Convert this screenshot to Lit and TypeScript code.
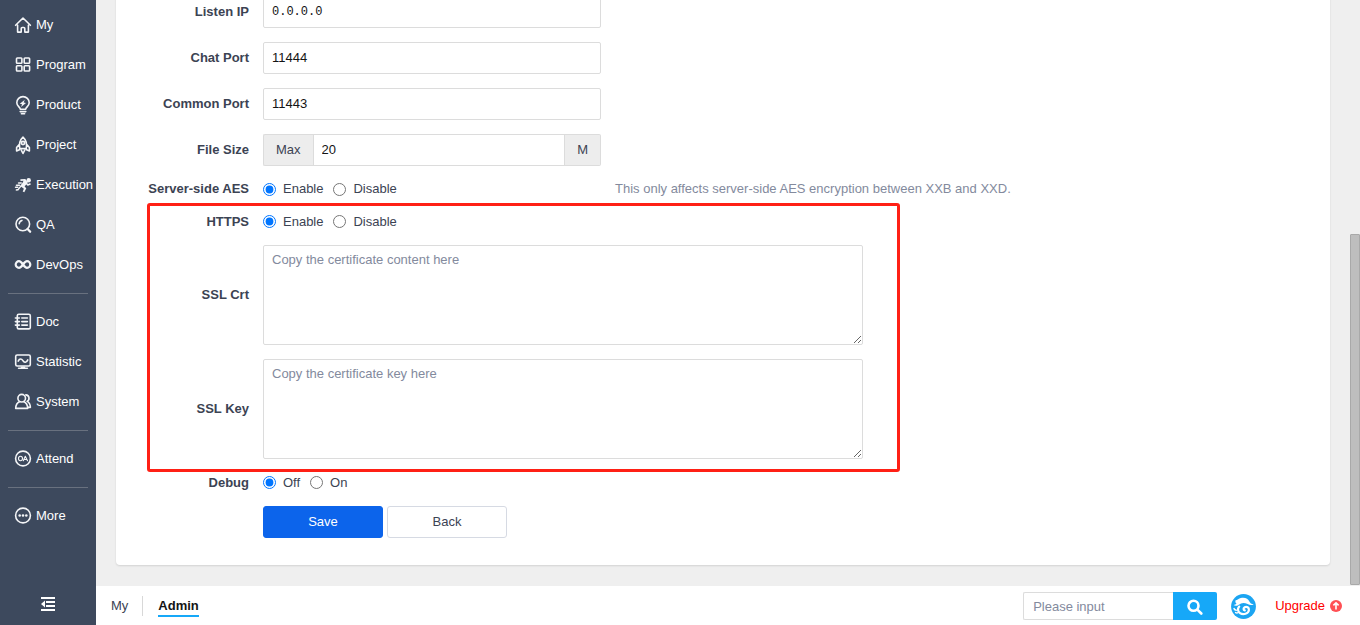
import { LitElement, html, svg, css, type TemplateResult } from "lit";
import { customElement } from "lit/decorators.js";

type Glyph = TemplateResult<2>;

const icons: Record<string, Glyph> = {
  home: svg`<path d="M2.600 8.200v6.900h3.600v-3.600q0-1 1-1h1.600q1 0 1 1v3.600h3.600V8.200M.6 8.300 8 1l7.400 7.300" />`,
  program: svg`<rect x="1.500" y="1" width="5.400" height="5.300" rx=".8" /><rect x="9.200" y="1" width="5.400" height="5.300" rx=".8" /><rect x="1.500" y="8.700" width="5.400" height="5.300" rx=".8" /><rect x="9.200" y="8.700" width="5.400" height="5.300" rx=".8" />`,
  bulb: svg`<path d="M5.300 12.200c0-2-3.500-3-3.500-6.400a6.200 6.200 0 0 1 12.400 0c0 3.400-3.500 4.400-3.500 6.400zM5.200 14.600h5.600M6.400 16.800h3.200" /><path class="fill" d="M9.800 2.700 4.800 6.700l2.300.6-1.100 2.800 5-4-2.300-.6z" />`,
  rocket: svg`<path d="M4.700 11.600C3.800 6.500 5.500 2.500 8 .2c2.500 2.300 4.200 6.300 3.300 11.400zM4.400 7.400 1.600 10.500v3.400l3.300-1.500M11.600 7.400l2.800 3.100v3.400l-3.300-1.500M6.400 13.400 8 16.500l1.600-3.100" /><circle cx="8" cy="6" r="1.600" />`,
  run: svg`<circle class="fill" cx="13.700" cy="3.200" r="2.200" /><path class="fill" d="M5.400 2.300 10.300 2l2.500 3.600-3.200 4 1.700 1.700-2 3.900-1.600-.7 1.200-2.700-2.700-2L3.300 13.600.8 13.700v-1.400l1.900-.2 4.900-6.300.9-2-3 .2z" /><path d="m11.300 6.300 1.500 1.700 2.200-1M3.600 6h2.600M1.500 8.200h3M.6 10.300h2.200" />`,
  search: svg`<circle cx="7.800" cy="7" r="6.800" /><path d="m12.600 11.900 2.600 2.900" class="thick" /><path d="M4.200 6.800q.2-2.700 2.700-3.400" />`,
  infinity: svg`<path class="thick" d="M8 7.500C6.300 5.100 5.300 4.200 4 4.200a3.300 3.300 0 0 0 0 6.600c1.300 0 2.300-.9 4-3.300s2.700-3.300 4-3.300a3.300 3.300 0 0 1 0 6.600c-1.300 0-2.300-.9-4-3.300z" />`,
  doc: svg`<rect x="2.300" y=".3" width="13" height="14.600" rx="1.500" /><path d="M.4 4h4M.4 7.600h4M.4 11.100h4M6.800 4h5.600M6.800 7.600h5.600M6.800 11.100h5.600" />`,
  chart: svg`<rect x=".7" y="1" width="14.600" height="11" rx="1.500" /><path d="M3.200 7.100C4.600 4.200 6.500 4.700 8 6.700s3.400 2.300 4.800-.8M3.600 14.200h8.800M6.500 13.200h3" />`,
  users: svg`<circle cx="6.700" cy="4.200" r="3.800" /><path d="M4.800 7.500C2.300 8.500 .8 10.700.7 14.400h12c-.1-3.700-1.600-5.900-4.100-6.900M10.800.9c3.800.4 4.200 4.900 1.300 6.500 2.100 1 3.200 3.200 3.300 6h-2" />`,
  badge: svg`<circle cx="8" cy="7.500" r="7.400" /><ellipse class="thin" cx="5.500" cy="7.500" rx="2" ry="2.200" /><path class="thin" d="m8.300 9.800 2-4.600 2.200 4.600M9.200 8.500h2.400" />`,
  more: svg`<circle cx="8" cy="7.500" r="7.400" /><circle class="fill" cx="4.700" cy="7.500" r="1.300" /><circle class="fill" cx="8" cy="7.500" r="1.300" /><circle class="fill" cx="11.300" cy="7.500" r="1.300" />`,
};

const menu: { label: string; icon: string }[][] = [
  [
    { label: "My", icon: "home" },
    { label: "Program", icon: "program" },
    { label: "Product", icon: "bulb" },
    { label: "Project", icon: "rocket" },
    { label: "Execution", icon: "run" },
    { label: "QA", icon: "search" },
    { label: "DevOps", icon: "infinity" },
  ],
  [
    { label: "Doc", icon: "doc" },
    { label: "Statistic", icon: "chart" },
    { label: "System", icon: "users" },
  ],
  [{ label: "Attend", icon: "badge" }],
  [{ label: "More", icon: "more" }],
];

@customElement("side-menu")
class SideMenu extends LitElement {
  static styles = css`
    :host {
      display: flex;
      flex-direction: column;
      width: 96px;
      flex: none;
      box-sizing: border-box;
      padding-top: 5px;
      background: #3d495d;
      overflow: hidden;
    }
    .group + .group {
      margin: 8px 8px 0;
      padding-top: 8px;
      border-top: 1px solid #69717f;
    }
    .group + .group .item {
      padding-left: 7px;
    }
    .item {
      display: flex;
      align-items: center;
      gap: 5px;
      height: 40px;
      padding-left: 15px;
      color: #fff;
      text-decoration: none;
      white-space: nowrap;
    }
    .icon {
      width: 16px;
      height: 16px;
      flex: none;
      overflow: visible;
      fill: none;
      stroke: #f4f5f7;
      stroke-width: 1.6;
      stroke-linecap: round;
      stroke-linejoin: round;
    }
    .fill {
      fill: #f4f5f7;
      stroke: none;
    }
    .thick {
      stroke-width: 2.2;
    }
    .thin {
      stroke-width: 1.1;
    }
    .fold {
      display: flex;
      justify-content: center;
      margin-top: auto;
      padding: 13px 0;
      border: 0;
      background: none;
      cursor: pointer;
    }
    .fold-icon {
      width: 16px;
      height: 16px;
      fill: #fff;
    }
  `;

  render() {
    return html`
      ${menu.map(
        (group) => html`<nav class="group">
          ${group.map(
            (item) => html`<a class="item" href="#">
              <svg class="icon" viewBox="0 0 16 16" aria-hidden="true">${icons[item.icon]}</svg>${item.label}
            </a>`
          )}
        </nav>`
      )}
      <button class="fold" aria-label="Collapse menu">
        <svg class="fold-icon" viewBox="0 0 16 16"><path d="M1 1h14v2H1zM6 5h9v2H6zM6 9h9v2H6zM1 13h14v2H1zM5 4.500v7L1 8z" /></svg>
      </button>
    `;
  }
}

@customElement("bottom-bar")
class BottomBar extends LitElement {
  static styles = css`
    :host {
      display: flex;
      align-items: center;
      flex: none;
      height: 39px;
      box-sizing: border-box;
      padding: 1px 18px 0 15px;
      background: #fff;
      color: #3c4353;
    }
    .crumbs {
      display: flex;
      align-items: flex-start;
      flex: 1;
    }
    .crumb {
      height: 20px;
      color: inherit;
      text-decoration: none;
      line-height: 22px;
    }
    .sep {
      width: 1px;
      height: 20px;
      margin: 1px 15px 0 14px;
      background: #d8d8d8;
    }
    .current {
      color: #141414;
      font-weight: bold;
      border-bottom: 2px solid #16a8f8;
    }
    .search {
      display: flex;
      height: 28px;
    }
    .query {
      width: 150px;
      box-sizing: border-box;
      padding: 1px 9px 0;
      border: 1px solid #dcdcdc;
      border-right: 0;
      border-radius: 2px 0 0 2px;
      font: inherit;
      outline: none;
    }
    .query::placeholder {
      color: #838a9d;
    }
    .go {
      display: flex;
      align-items: center;
      justify-content: center;
      width: 44px;
      padding: 2px 0 0;
      border: 0;
      border-radius: 0 2px 2px 0;
      background: #16a8f8;
    }
    .go-icon {
      width: 16px;
      height: 16px;
      fill: none;
      stroke: #fff;
      stroke-width: 2.6;
      stroke-linecap: round;
    }
    .logo {
      width: 25px;
      height: 25px;
      margin: 0 19px 0 14px;
    }
    .upgrade {
      display: flex;
      align-items: center;
      gap: 5px;
      color: #f00;
      text-decoration: none;
    }
    .up {
      width: 12px;
      height: 12px;
    }
  `;

  render() {
    return html`
      <nav class="crumbs">
        <a class="crumb" href="#">My</a>
        <span class="sep"></span>
        <a class="crumb current" href="#">Admin</a>
      </nav>
      <form class="search" role="search">
        <input class="query" type="text" placeholder="Please input" aria-label="Search" />
        <button class="go" type="button" aria-label="Search">
          <svg class="go-icon" viewBox="0 0 16 16"><circle cx="6.500" cy="6.800" r="5" /><path d="m10.600 10.800 3.700 3.700" /></svg>
        </button>
      </form>
      <svg class="logo" viewBox="0 0 25 25" aria-hidden="true">
        <circle cx="12.500" cy="12.500" r="12.400" fill="#1ca5f2" />
        <path fill="#fff" d="M4.600 6.300C6.500 6.300 7.700 4.600 9.800 4c4-1.100 7.400.7 8.600 3.400.7 1.600 2 2.600 4.400 3-1.700.9-4.100.9-6.200-.3-2.300-1.300-4.600-1.600-6.600-.7-1.800.8-2.600 2-4.400 2.300-1.200.2-2.300-.1-3-.7 1.300-.2 2.300-.7 3-1.500-1.200-.4-1.500-1.700-1-3.200z" />
        <g fill="none" stroke="#fff" stroke-linecap="round" stroke-linejoin="round">
          <path stroke-width="2.200" d="M8.200 12.600c-2 2.200-1.300 5.200.8 6.600 3.300 2.100 8.500.5 8.900-3.100.3-2.600-2.200-4-4.200-2.900-1.600.9-1.500 3 .1 3.200" />
          <path stroke-width="1.500" d="M3 14.600c.5 1.100 1.300 1.600 2.300 1.600M4.600 18.600c.8.400 1.600.4 2.500 0" />
        </g>
      </svg>
      <a class="upgrade" href="#">Upgrade
        <svg class="up" viewBox="0 0 12 12" aria-hidden="true">
          <circle cx="6" cy="6" r="6" fill="#ff5054" />
          <path d="M6 9.500V3M3.400 5.400 6 2.800l2.600 2.600" fill="none" stroke="#fff" stroke-width="1.600" />
        </svg>
      </a>
    `;
  }
}

@customElement("server-form")
class ServerForm extends LitElement {
  static styles = css`
    :host {
      display: block;
    }
    .row {
      display: grid;
      grid-template-columns: 113px minmax(0, 338px) minmax(0, 1fr);
      column-gap: 14px;
      align-items: center;
      box-sizing: border-box;
      min-height: 33px;
      padding: 7px 0;
    }
    .row--note {
      min-height: 32px;
      padding: 6px 0;
    }
    .row--choice {
      padding: 6px 0;
    }
    .label {
      color: #3c4353;
      font-weight: bold;
      text-align: right;
    }
    .field {
      width: 100%;
      height: 32px;
      box-sizing: border-box;
      padding: 0 8px 2px;
      border: 1px solid #dcdcdc;
      border-radius: 2px;
      background: #fff;
      color: #141414;
      font: inherit;
      outline: none;
    }
    .mono {
      padding-bottom: 0;
      font-family: "Liberation Mono", monospace;
      font-size: 12px;
    }
    .area {
      display: block;
      grid-column: 2 / 4;
      height: 100px;
      max-width: 600px;
      padding: 4px 8px;
      line-height: 20px;
      resize: vertical;
    }
    .area::placeholder {
      color: #838a9d;
    }
    .addon-group {
      display: flex;
    }
    .addon-group .field {
      flex: 1;
      min-width: 0;
      border-radius: 0;
    }
    .addon {
      display: flex;
      align-items: center;
      padding: 0 12px;
      border: 1px solid #dcdcdc;
      background: #ededed;
    }
    .addon--start {
      border-right: 0;
      border-radius: 2px 0 0 2px;
    }
    .addon--end {
      border-left: 0;
      border-radius: 0 2px 2px 0;
    }
    .choices {
      display: flex;
      gap: 10px;
    }
    .choice {
      display: flex;
      align-items: center;
      gap: 7px;
      line-height: 20px;
    }
    .radio {
      width: 13px;
      height: 13px;
      margin: 0;
    }
    .note {
      color: #838a9d;
    }
    .highlight {
      position: relative;
      max-width: 764px;
    }
    .highlight::after {
      content: "";
      position: absolute;
      inset: -2px 0 -6px 11px;
      border: 3px solid #ff2015;
      border-radius: 3px;
      pointer-events: none;
    }
    .actions {
      display: flex;
      grid-column: 2 / 4;
      gap: 4px;
    }
    .btn {
      width: 120px;
      height: 32px;
      border: 1px solid #d6dae3;
      border-radius: 3px;
      background: #fff;
      color: #3c4353;
      font: inherit;
    }
    .btn--primary {
      border-color: #0c64eb;
      background: #0c64eb;
      color: #fff;
    }
  `;

  private radios(name: string, options: string[]) {
    return html`<div class="choices" role="radiogroup" aria-labelledby=${name}>
      ${options.map(
        (option, i) => html`<label class="choice">
          <input class="radio" type="radio" name=${name} ?checked=${i === 0} />${option}
        </label>`
      )}
    </div>`;
  }

  render() {
    return html`
      <form>
        <div class="row">
          <label class="label" for="ip">Listen IP</label>
          <input class="field mono" id="ip" type="text" value="0.0.0.0" />
        </div>
        <div class="row">
          <label class="label" for="chat">Chat Port</label>
          <input class="field" id="chat" type="text" value="11444" />
        </div>
        <div class="row">
          <label class="label" for="common">Common Port</label>
          <input class="field" id="common" type="text" value="11443" />
        </div>
        <div class="row">
          <label class="label" for="size">File Size</label>
          <div class="addon-group">
            <span class="addon addon--start">Max</span>
            <input class="field" id="size" type="text" value="20" />
            <span class="addon addon--end">M</span>
          </div>
        </div>
        <div class="row row--note">
          <span class="label" id="aes">Server-side AES</span>
          ${this.radios("aes", ["Enable", "Disable"])}
          <span class="note">This only affects server-side AES encryption between XXB and XXD.</span>
        </div>
        <div class="highlight">
          <div class="row row--choice">
            <span class="label" id="https">HTTPS</span>
            ${this.radios("https", ["Enable", "Disable"])}
          </div>
          <div class="row">
            <label class="label" for="crt">SSL Crt</label>
            <textarea class="field area" id="crt" placeholder="Copy the certificate content here"></textarea>
          </div>
          <div class="row">
            <label class="label" for="key">SSL Key</label>
            <textarea class="field area" id="key" placeholder="Copy the certificate key here"></textarea>
          </div>
        </div>
        <div class="row row--choice">
          <span class="label" id="debug">Debug</span>
          ${this.radios("debug", ["Off", "On"])}
        </div>
        <div class="row">
          <span></span>
          <div class="actions">
            <button class="btn btn--primary" type="button">Save</button>
            <button class="btn" type="button">Back</button>
          </div>
        </div>
      </form>
    `;
  }
}

@customElement("app-root")
class AppRoot extends LitElement {
  static styles = css`
    :host {
      display: flex;
      height: 100vh;
      overflow: hidden;
      background: #efefef;
      color: #3c4353;
      font: 13px/20px "Liberation Sans", Arial, sans-serif;
    }
    .page {
      display: flex;
      flex: 1;
      flex-direction: column;
      min-width: 0;
    }
    .body {
      display: flex;
      flex: 1;
      min-height: 0;
      overflow: hidden;
    }
    .content {
      display: flex;
      flex: 1;
      flex-direction: column;
      justify-content: flex-end;
      min-width: 0;
      padding: 0 20px 21px;
    }
    .card {
      padding: 20px;
      border-radius: 4px;
      background: #fff;
      box-shadow: 0 1px 2px rgba(0, 0, 0, 0.12);
    }
    .track {
      display: flex;
      flex-direction: column;
      justify-content: flex-end;
      width: 10px;
      padding-bottom: 1px;
    }
    .thumb {
      height: 60%;
      box-sizing: border-box;
      border: 1px solid #a9a9a9;
      border-radius: 1px;
      background: #bebebe;
    }
  `;

  render() {
    return html`
      <side-menu></side-menu>
      <div class="page">
        <div class="body">
          <main class="content">
            <section class="card"><server-form></server-form></section>
          </main>
          <div class="track"><div class="thumb"></div></div>
        </div>
        <bottom-bar></bottom-bar>
      </div>
    `;
  }
}
